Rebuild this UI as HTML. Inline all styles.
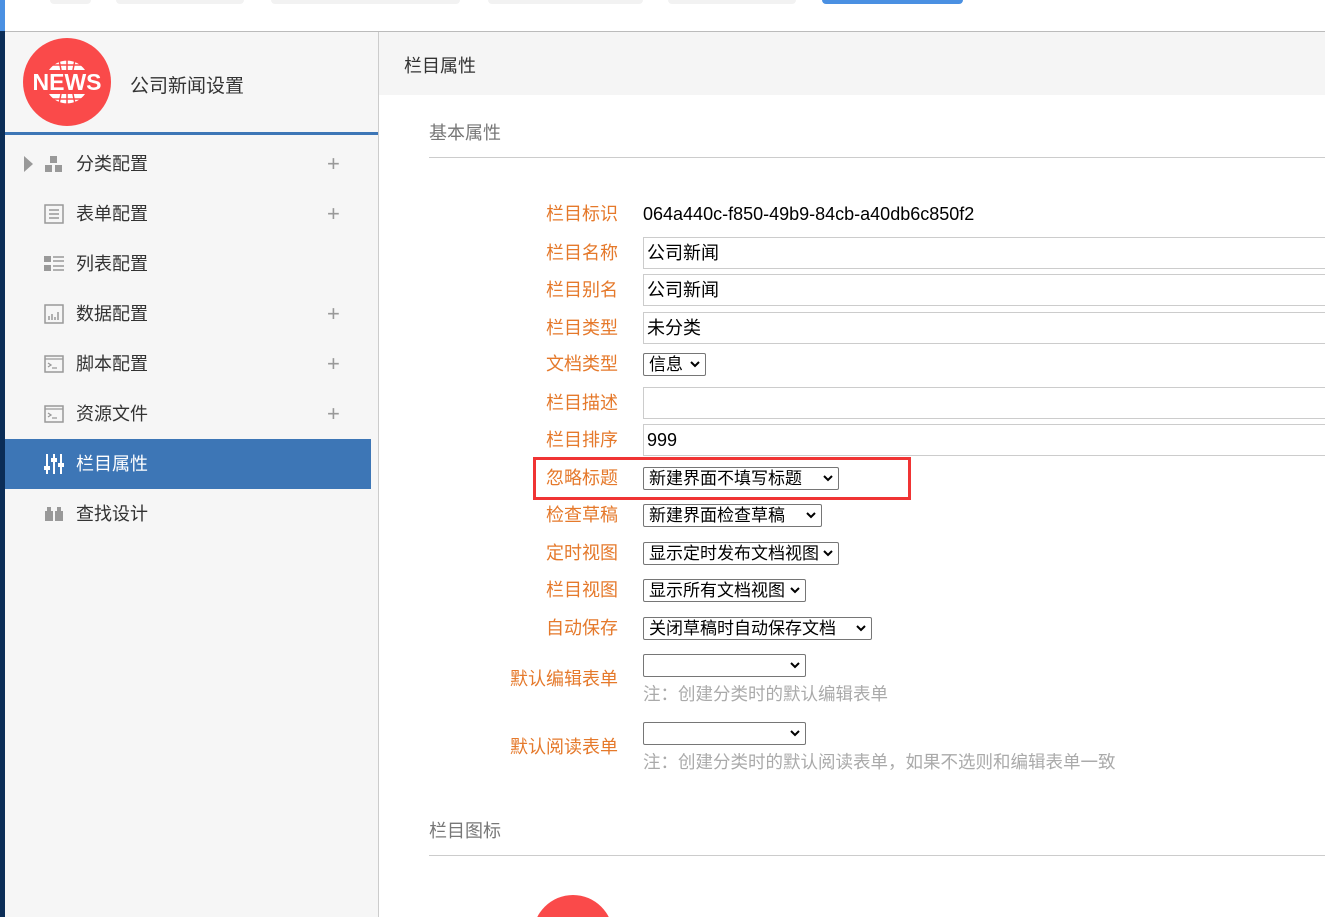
<!DOCTYPE html>
<html style="width:1325px;height:917px;overflow:hidden"><head><meta charset="utf-8">
<style>
*{margin:0;padding:0;box-sizing:border-box}
html,body{overflow:hidden}
body{width:1325px;height:917px;position:relative;background:#fff;font-family:"Liberation Sans","Noto Sans CJK SC",sans-serif;font-size:18px;color:#333}
.a{position:absolute}
.tab{position:absolute;top:0;height:4px;background:#f2f2f2;border-radius:0 0 8px 8px}
.mi{position:absolute;left:76px;height:50px;line-height:50px;font-size:18px;color:#333;white-space:nowrap}
.plus{position:absolute;left:327px;font-size:22px;color:#999;line-height:50px;height:50px}
.ic{position:absolute;left:44px}
.lb{position:absolute;right:707px;color:#e5792b;font-size:18px;white-space:nowrap;line-height:24px}
.val{position:absolute;left:643px;font-size:18px;color:#000;white-space:nowrap;line-height:24px}
.inp{position:absolute;left:643px;width:682px;height:32px;border:1px solid #ccc;border-right:none;padding-left:3px;line-height:30px;color:#000;font-size:18px}
.sel{position:absolute;left:643px;height:23px;border:1px solid #767676;border-radius:2px;font-size:17px;line-height:21px;padding-left:5px;color:#000;white-space:nowrap;overflow:hidden}
.sel svg{position:absolute;right:5px;top:7px}
.note{position:absolute;left:643px;color:#aaa;font-size:17.5px;white-space:nowrap;line-height:24px}
.sec{position:absolute;left:429px;color:#777;font-size:18px;line-height:24px}
.hr{position:absolute;left:429px;width:896px;height:1px;background:#ccc}
</style></head><body>
<div class="a" style="left:0;top:0;width:5px;height:31px;background:#4a90e2"></div>
<div class="a" style="left:0;top:31px;width:5px;height:886px;background:#0b2d57"></div>
<div class="tab" style="left:50px;width:41px"></div>
<div class="tab" style="left:116px;width:128px"></div>
<div class="tab" style="left:271px;width:189px"></div>
<div class="tab" style="left:488px;width:155px"></div>
<div class="tab" style="left:668px;width:128px"></div>
<div class="tab" style="left:822px;width:141px;background:#4a90e2"></div>
<div class="a" style="left:5px;top:31px;width:1320px;height:1px;background:#bbb"></div>
<div class="a" style="left:5px;top:32px;width:374px;height:885px;background:#f6f6f6;border-right:1px solid #ccc"></div>
<svg class="a" style="left:23px;top:38px" width="88" height="88" viewBox="0 0 88 88">
<circle cx="44" cy="44" r="44" fill="#fa4a4a"/>
<path d="M26 32 A22 22 0 0 1 62 32Z" fill="#fff"/>
<path d="M26 56 A22 22 0 0 0 62 56Z" fill="#fff"/>
<path d="M44 20 V32 M44 56 V68 M36 22 L38 32 M52 22 L50 32 M36 66 L38 56 M52 66 L50 56 M28 27 H60 M28 61 H60" stroke="#fa4a4a" stroke-width="1.5"/>
<text x="44" y="52" text-anchor="middle" font-family="Liberation Sans" font-weight="bold" font-size="23" fill="#fff">NEWS</text>
</svg>
<div class="a" style="left:130px;top:71px;font-size:19px;color:#333">公司新闻设置</div>
<div class="a" style="left:5px;top:132px;width:373px;height:3px;background:#3d76b6"></div>
<div class="a" style="left:5px;top:439px;width:366px;height:50px;background:#3d76b6"></div>
<div class="a" style="left:24px;top:156px;width:0;height:0;border-top:8px solid transparent;border-bottom:8px solid transparent;border-left:9px solid #999"></div>
<svg class="ic" style="top:155px" width="20" height="18"><rect x="6" y="1" width="7" height="7" fill="#999"/><rect x="1" y="10" width="7" height="7" fill="#999"/><rect x="11" y="10" width="7" height="7" fill="#999"/></svg>
<svg class="ic" style="top:204px" width="20" height="20"><rect x="1" y="1" width="18" height="18" fill="none" stroke="#999" stroke-width="1.5"/><path d="M5 6H15M5 10H15M5 14H15" stroke="#999" stroke-width="1.5"/></svg>
<svg class="ic" style="top:255px" width="20" height="18"><rect x="0" y="1" width="7" height="6" fill="#999"/><rect x="0" y="10" width="7" height="6" fill="#999"/><path d="M9 2H20M9 6H20M9 11H20M9 15H20" stroke="#999" stroke-width="1.5"/></svg>
<svg class="ic" style="top:304px" width="20" height="20"><rect x="1" y="1" width="18" height="18" fill="none" stroke="#999" stroke-width="1.5"/><path d="M5 16V12M8 16V10M11 16V13M14 16V8" stroke="#999" stroke-width="1.5"/></svg>
<svg class="ic" style="top:355px" width="20" height="18"><rect x="1" y="1" width="18" height="16" fill="none" stroke="#999" stroke-width="1.5"/><path d="M1 4H19M4 8L7 10L4 12M8 13H13" stroke="#999" stroke-width="1.3" fill="none"/></svg>
<svg class="ic" style="top:405px" width="20" height="18"><rect x="1" y="1" width="18" height="16" fill="none" stroke="#999" stroke-width="1.5"/><path d="M1 4H19M4 8L7 10L4 12M8 13H13" stroke="#999" stroke-width="1.3" fill="none"/></svg>
<svg class="ic" style="top:454px" width="20" height="20"><path d="M3 0V20M10 0V20M17 0V20" stroke="#fff" stroke-width="2"/><rect x="0" y="12" width="6" height="4" fill="#fff"/><rect x="7" y="4" width="6" height="4" fill="#fff"/><rect x="14" y="9" width="6" height="4" fill="#fff"/></svg>
<svg class="ic" style="top:506px" width="20" height="16"><rect x="1" y="5" width="8" height="10" fill="#999"/><rect x="11" y="5" width="8" height="10" fill="#999"/><rect x="3" y="1" width="4" height="5" fill="#999"/><rect x="13" y="1" width="4" height="5" fill="#999"/></svg>
<div class="mi" style="top:139px">分类配置</div><div class="plus" style="top:139px">+</div>
<div class="mi" style="top:189px">表单配置</div><div class="plus" style="top:189px">+</div>
<div class="mi" style="top:239px">列表配置</div>
<div class="mi" style="top:289px">数据配置</div><div class="plus" style="top:289px">+</div>
<div class="mi" style="top:339px">脚本配置</div><div class="plus" style="top:339px">+</div>
<div class="mi" style="top:389px">资源文件</div><div class="plus" style="top:389px">+</div>
<div class="mi" style="top:439px;color:#fff">栏目属性</div>
<div class="mi" style="top:489px">查找设计</div>
<div class="a" style="left:379px;top:32px;width:946px;height:63px;background:#f5f5f5"></div>
<div class="a" style="left:404px;top:52px;font-size:18px;color:#333">栏目属性</div>
<div class="sec" style="top:121px">基本属性</div>
<div class="hr" style="top:157px"></div>
<div class="lb" style="top:202px">栏目标识</div><div class="val" style="top:202px">064a440c-f850-49b9-84cb-a40db6c850f2</div>
<div class="lb" style="top:241px">栏目名称</div><div class="inp" style="top:237px">公司新闻</div>
<div class="lb" style="top:278px">栏目别名</div><div class="inp" style="top:274px">公司新闻</div>
<div class="lb" style="top:316px">栏目类型</div><div class="inp" style="top:312px">未分类</div>
<div class="lb" style="top:352px">文档类型</div><div class="sel" style="top:353px;width:63px">信息<svg width="10" height="7"><path d="M1 1L5 5L9 1" stroke="#000" stroke-width="2" fill="none"/></svg></div>
<div class="lb" style="top:391px">栏目描述</div><div class="inp" style="top:387px"></div>
<div class="lb" style="top:428px">栏目排序</div><div class="inp" style="top:424px">999</div>
<div class="a" style="left:533px;top:457px;width:378px;height:43px;border:3px solid #f03434"></div>
<div class="lb" style="top:466px">忽略标题</div><div class="sel" style="top:467px;width:196px">新建界面不填写标题<svg width="10" height="7"><path d="M1 1L5 5L9 1" stroke="#000" stroke-width="2" fill="none"/></svg></div>
<div class="lb" style="top:503px">检查草稿</div><div class="sel" style="top:504px;width:179px">新建界面检查草稿<svg width="10" height="7"><path d="M1 1L5 5L9 1" stroke="#000" stroke-width="2" fill="none"/></svg></div>
<div class="lb" style="top:541px">定时视图</div><div class="sel" style="top:542px;width:196px">显示定时发布文档视图<svg width="10" height="7"><path d="M1 1L5 5L9 1" stroke="#000" stroke-width="2" fill="none"/></svg></div>
<div class="lb" style="top:578px">栏目视图</div><div class="sel" style="top:579px;width:163px">显示所有文档视图<svg width="10" height="7"><path d="M1 1L5 5L9 1" stroke="#000" stroke-width="2" fill="none"/></svg></div>
<div class="lb" style="top:616px">自动保存</div><div class="sel" style="top:617px;width:229px">关闭草稿时自动保存文档<svg width="10" height="7"><path d="M1 1L5 5L9 1" stroke="#000" stroke-width="2" fill="none"/></svg></div>
<div class="lb" style="top:667px">默认编辑表单</div><div class="sel" style="top:654px;width:163px"><svg width="10" height="7"><path d="M1 1L5 5L9 1" stroke="#000" stroke-width="2" fill="none"/></svg></div>
<div class="note" style="top:682px">注：创建分类时的默认编辑表单</div>
<div class="lb" style="top:735px">默认阅读表单</div><div class="sel" style="top:722px;width:163px"><svg width="10" height="7"><path d="M1 1L5 5L9 1" stroke="#000" stroke-width="2" fill="none"/></svg></div>
<div class="note" style="top:750px">注：创建分类时的默认阅读表单，如果不选则和编辑表单一致</div>
<div class="sec" style="top:819px">栏目图标</div>
<div class="hr" style="top:855px"></div>
<div class="a" style="left:533px;top:895px;width:80px;height:22px;overflow:hidden"><div style="width:80px;height:80px;border-radius:50%;background:#fa4a4a"></div></div>
</body></html>
